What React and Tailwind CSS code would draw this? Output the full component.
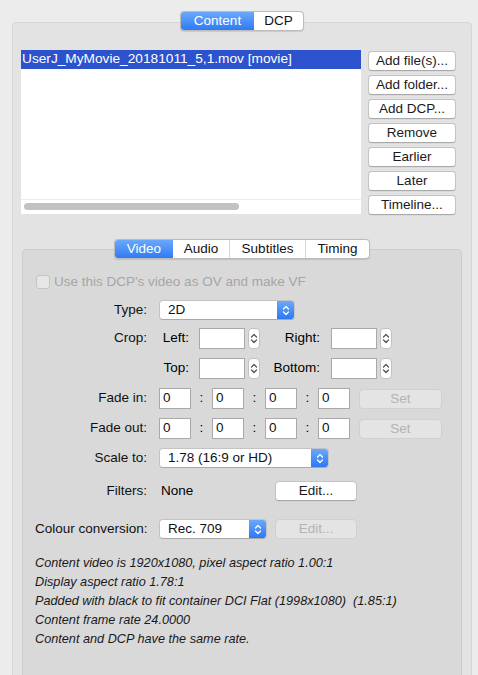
import React from 'react';

const FONT = "font-['Liberation_Sans','Helvetica',sans-serif]";

const contentButtons = ['Add file(s)...', 'Add folder...', 'Add DCP...', 'Remove', 'Earlier', 'Later', 'Timeline...'];

const infoLines = [
  'Content video is 1920x1080, pixel aspect ratio 1.00:1',
  'Display aspect ratio 1.78:1',
  'Padded with black to fit container DCI Flat (1998x1080) \u00a0(1.85:1)',
  'Content frame rate 24.0000',
  'Content and DCP have the same rate.'
];

const UpDown = ({ className }) => (
  <svg width="8" height="13" viewBox="0 0 8 13" className={className} fill="none" stroke="currentColor" strokeWidth="1.3" strokeLinecap="round" strokeLinejoin="round">
    <path d="M1.5 5 L4 2.5 L6.5 5" />
    <path d="M1.5 8 L4 10.5 L6.5 8" />
  </svg>
);

const Button = ({ children, width, disabled }) => (
  <div
    className={`${width} h-[20px] flex items-center justify-center rounded-[4px] border text-[13.5px] leading-none ${
      disabled
        ? 'bg-[#e4e4e4] border-[#d0d0d0] text-[#b3b3b3]'
        : 'bg-white border-[#c3c3c3] border-b-[#a9a9a9] text-[#1a1a1a] shadow-[0_0.5px_0.5px_rgba(0,0,0,0.08)]'
    }`}
  >
    {children}
  </div>
);

const Select = ({ value, width }) => (
  <div className={`${width} h-[20px] flex rounded-[4px] bg-white border border-[#c3c3c3] border-b-[#a9a9a9] overflow-hidden`}>
    <div className="flex-1 flex items-center pl-[8px] text-[13.5px] text-[#111]">{value}</div>
    <div className="w-[17px] flex items-center justify-center bg-gradient-to-b from-[#6aa8fb] to-[#2d78f3] text-white">
      <UpDown />
    </div>
  </div>
);

const TextBox = ({ value, width }) => (
  <div className={`${width} h-[21px] bg-white border border-[#a9a9a9] flex items-center pl-[3px] text-[13.5px] text-[#111]`}>
    {value}
  </div>
);

const Stepper = () => (
  <div className="ml-[3px] w-[12px] h-[21px] bg-white rounded-[4px] border border-[#c0c0c0] flex items-center justify-center text-[#555]">
    <UpDown />
  </div>
);

const Label = ({ children }) => (
  <div className="w-[112px] mr-[12px] text-right text-[13.5px] text-[#111] shrink-0 whitespace-nowrap">{children}</div>
);

const Segmented = ({ tabs }) => (
  <div className="relative z-10 flex h-[20px] rounded-[4px] border border-[#bcbcbc] bg-white overflow-hidden shadow-[0_0.5px_1px_rgba(0,0,0,0.12)]">
    {tabs.map((t, i) => (
      <div
        key={t.name}
        className={`${t.width} flex items-center justify-center text-[13.5px] ${
          t.active ? 'bg-gradient-to-b from-[#6aa8fb] to-[#2f7af4] text-white' : 'text-[#111]'
        } ${i > 0 && !tabs[i - 1].active ? 'border-l border-[#d6d6d6]' : ''}`}
      >
        {t.name}
      </div>
    ))}
  </div>
);

const FadeRow = ({ label }) => (
  <div className="flex items-center h-[21px] mt-[9px]">
    <Label>{label}</Label>
    <TextBox value="0" width="w-[32px]" />
    <div className="w-[21px] text-center text-[13.5px]">:</div>
    <TextBox value="0" width="w-[32px]" />
    <div className="w-[21px] text-center text-[13.5px]">:</div>
    <TextBox value="0" width="w-[32px]" />
    <div className="w-[21px] text-center text-[13.5px]">:</div>
    <TextBox value="0" width="w-[32px]" />
    <div className="ml-[9px]">
      <Button width="w-[83px]" disabled>Set</Button>
    </div>
  </div>
);

export default function App() {
  return (
    <div className={`w-[478px] h-[675px] overflow-hidden bg-[#ececec] pt-[11px] ${FONT}`}>
      <div className="ml-[12px] w-[460px] flex justify-center">
        <Segmented
          tabs={[
            { name: 'Content', width: 'w-[73px]', active: true },
            { name: 'DCP', width: 'w-[49px]' }
          ]}
        />
      </div>

      <div className="ml-[12px] w-[460px] mt-[-9px] h-[700px] rounded-[4px] border border-[#d6d6d6] bg-[#e3e3e3] pt-[27px] pl-[8px]">
        <div className="flex">
          <div className="w-[340px] h-[164px] bg-white flex flex-col">
            <div className="h-[19px] bg-[#2c52cd] text-white text-[13.7px] flex items-center pl-[1px] whitespace-nowrap">
              UserJ_MyMovie_20181011_5,1.mov [movie]
            </div>
            <div className="flex-1" />
            <div className="h-[15px] border-t border-[#ededed] pt-[3px] pl-[3px]">
              <div className="w-[215px] h-[7px] rounded-full bg-[#c2c2c2]" />
            </div>
          </div>
          <div className="ml-[7px] mt-[1px] flex flex-col gap-[4px]">
            {contentButtons.map((b) => (
              <Button key={b} width="w-[88px]">{b}</Button>
            ))}
          </div>
        </div>

        <div className="ml-[1px] w-[440px] mt-[24px]">
          <div className="flex justify-center">
            <Segmented
              tabs={[
                { name: 'Video', width: 'w-[58px]', active: true },
                { name: 'Audio', width: 'w-[56px]' },
                { name: 'Subtitles', width: 'w-[76px]' },
                { name: 'Timing', width: 'w-[64px]' }
              ]}
            />
          </div>

          <div className="mt-[-10px] h-[500px] rounded-[4px] border border-[#cccccc] bg-[#d9d9d9] pt-[25px] pl-[12px]">
            <div className="flex items-center h-[14px]">
              <div className="ml-[1px] w-[14px] h-[14px] rounded-[3px] border border-[#c4c4c4] bg-[#e6e6e6]" />
              <div className="ml-[4px] text-[13.5px] text-[#a6a6a6]">Use this DCP's video as OV and make VF</div>
            </div>

            <div className="flex items-center h-[20px] mt-[11px]">
              <Label>Type:</Label>
              <Select value="2D" width="w-[136px]" />
            </div>

            <div className="flex items-center h-[21px] mt-[8px]">
              <Label>Crop:</Label>
              <div className="w-[30px] text-right text-[13.5px]">Left:</div>
              <div className="ml-[10px]"><TextBox width="w-[46px]" /></div>
              <Stepper />
              <div className="w-[60px] text-right text-[13.5px]">Right:</div>
              <div className="ml-[11px]"><TextBox width="w-[46px]" /></div>
              <Stepper />
            </div>

            <div className="flex items-center h-[21px] mt-[9px]">
              <Label />
              <div className="w-[30px] text-right text-[13.5px]">Top:</div>
              <div className="ml-[10px]"><TextBox width="w-[46px]" /></div>
              <Stepper />
              <div className="w-[60px] text-right text-[13.5px]">Bottom:</div>
              <div className="ml-[11px]"><TextBox width="w-[46px]" /></div>
              <Stepper />
            </div>

            <FadeRow label="Fade in:" />
            <FadeRow label="Fade out:" />

            <div className="flex items-center h-[20px] mt-[9px]">
              <Label>Scale to:</Label>
              <Select value="1.78 (16:9 or HD)" width="w-[170px]" />
            </div>

            <div className="flex items-center h-[20px] mt-[13px]">
              <Label>Filters:</Label>
              <div className="w-[116px] pl-[2px] text-[13.5px]">None</div>
              <Button width="w-[82px]">Edit...</Button>
            </div>

            <div className="flex items-center h-[20px] mt-[18px]">
              <Label>Colour conversion:</Label>
              <Select value="Rec. 709" width="w-[108px]" />
              <div className="ml-[8px]">
                <Button width="w-[82px]" disabled>Edit...</Button>
              </div>
            </div>

            <div className="mt-[15px] text-[12.7px] leading-[19px] italic text-[#1a1a1a] whitespace-nowrap">
              {infoLines.map((l) => (
                <div key={l}>{l}</div>
              ))}
            </div>
          </div>
        </div>
      </div>
    </div>
  );
}
